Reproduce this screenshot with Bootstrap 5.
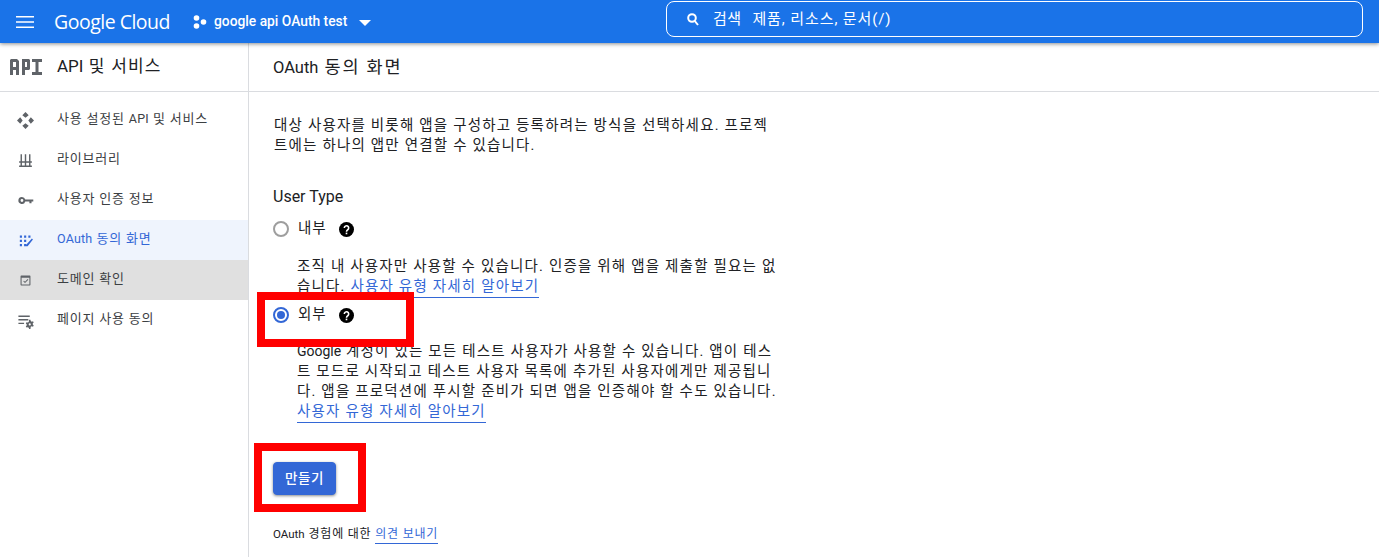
<!DOCTYPE html>
<html lang="ko">
<head>
  <meta charset="UTF-8">
  <title>OAuth 동의 화면</title>
  <link href="https://cdn.jsdelivr.net/npm/bootstrap@5.3.0/dist/css/bootstrap.min.css" rel="stylesheet">
  <style>
    html, body { height: 100%; overflow: hidden; }
    body {
      font-family: Roboto, "Noto Sans CJK KR", sans-serif;
      font-size: 14px;
      color: #202124;
      background: #fff;
    }
    .latin { letter-spacing: 0; font-size: 14px; }
    .top-bar {
      height: 43px;
      background: #1a73e8;
      color: #fff;
      box-shadow: 0 1px 4px rgba(60, 64, 67, .6);
      position: relative;
      z-index: 2;
    }
    .menu-btn { width: 50px; padding-left: 16px; }
    .brand-name { font-family: "Open Sans", sans-serif; font-size: 19.5px; letter-spacing: -.5px; width: 139px; }
    .project-name { font-size: 13.8px; font-weight: 500; width: 473px; }
    .project-name svg { margin-right: 7px; }
    .caret-down { border-left: 6px solid transparent; border-right: 6px solid transparent; border-top: 6px solid #fff; margin-left: 12px; margin-top: 2px; }
    .search-box {
      width: 697px;
      height: 36px;
      border: 1px solid #fff;
      border-radius: 8px;
      padding-left: 20px;
      margin-top: -5px;
      font-size: 15px;
      letter-spacing: .4px;
    }
    .search-box svg { margin-right: 14px; }
    .search-hint { margin-left: 11px; letter-spacing: .9px; }
    .page-body { height: 514px; }
    .side-col { width: 249px; border-right: 1px solid #dadce0; flex-shrink: 0; }
    .side-head { height: 49px; border-bottom: 1px solid #dadce0; padding-left: 10px; font-size: 17px; letter-spacing: 1.2px; margin-bottom: 8px; }
    .side-head svg { margin-right: 15px; }
    .side-head .latin { font-size: 17px; }
    .side-link { height: 40px; padding-left: 17px; padding-bottom: 2px; font-size: 13px; color: #3c4043; text-decoration: none; letter-spacing: .8px; }
    .side-link .latin { font-size: 12.5px; letter-spacing: .2px; }
    .side-link svg { width: 17px; height: 17px; margin: 2px 23px 0 0; flex-shrink: 0; fill: #5f6368; }
    .side-link.is-active { background: #eff4fd; color: #3367d6; }
    .side-link.is-active svg { fill: #3367d6; }
    .side-link.is-hover { background: #e0e0e0; }
    .main-head { height: 49px; border-bottom: 1px solid #dadce0; padding-left: 24px; font-size: 17.5px; letter-spacing: 1.8px; }
    .main-head .latin { font-size: 16.5px; }
    .main-body { padding: 24px 0 0 24px; width: 560px; }
    .intro-text { margin: 0 0 29px 1px; line-height: 20px; width: 530px; font-size: 14.5px; letter-spacing: 1.2px; }
    .type-title { font-size: 16px; line-height: 24px; margin-bottom: 8px; }
    .type-row { height: 24px; font-size: 14.5px; letter-spacing: 1px; }
    .second-row { margin-top: 6px; }
    .radio-ring { width: 16px; height: 16px; border: 2px solid #9e9e9e; border-radius: 50%; margin-right: 9px; flex-shrink: 0; }
    .radio-ring.is-on { border-color: #3367d6; padding: 2px; }
    .radio-ring.is-on::after { content: ""; display: block; width: 8px; height: 8px; background: #3367d6; border-radius: 50%; }
    .help-mark { margin-left: 12px; }
    .type-desc { margin: 14px 0 0 24px; width: 500px; line-height: 20px; font-size: 14.5px; letter-spacing: 1.2px; }
    .type-desc.first-desc { margin-top: 16px; }
    .type-desc a, .feedback-line a { color: #3367d6; text-decoration: none; border-bottom: 1px solid #3367d6; padding-bottom: 2px; }
    .create-btn {
      background: #3367d6;
      border-color: #3367d6;
      color: #fff;
      font-size: 13.5px;
      font-weight: 500;
      letter-spacing: .5px;
      width: 63px;
      height: 33px;
      padding: 0;
      border-radius: 4px;
      margin-top: 40px;
      box-shadow: 0 1px 3px rgba(60, 64, 67, .6);
    }
    .feedback-line { font-size: 12px; letter-spacing: .8px; margin-top: 30px; }
    .feedback-line .latin { font-size: 11.5px; }
    .red-frame { position: absolute; border: 8px solid #f00; z-index: 3; pointer-events: none; }
    .red-one { left: 257px; top: 292px; width: 157px; height: 55px; }
    .red-two { left: 254px; top: 443px; width: 112px; height: 69px; }
  </style>
</head>
<body>
  <header class="top-bar d-flex align-items-center">
    <div class="menu-btn d-flex align-items-center">
      <svg width="18" height="12" viewBox="0 0 18 12" fill="#fff"><path d="M0 0h18v1.6H0zM0 5.2h18v1.6H0zM0 10.4h18V12H0z"/></svg>
    </div>
    <div class="brand-name ms-1">Google Cloud</div>
    <div class="project-name d-flex align-items-center">
      <svg width="14" height="14" viewBox="0 0 14 14" fill="#fff"><circle cx="3.500" cy="3" r="2.800"/><circle cx="3.500" cy="11" r="2.800"/><circle cx="10.500" cy="7" r="2.800"/></svg>
      google api OAuth test
      <span class="caret-down"></span>
    </div>
    <div class="search-box d-flex align-items-center">
      <svg width="12" height="13" viewBox="0 0 12 13" fill="none" stroke="#fff" stroke-width="2"><circle cx="5" cy="5" r="3.800"/><path d="M7.800 8 11 12"/></svg>
      검색 <span class="search-hint">제품, 리소스, 문서(/)</span>
    </div>
  </header>

  <div class="page-body d-flex">
    <nav class="side-col">
      <div class="side-head d-flex align-items-center">
        <svg width="32" height="16" viewBox="0 0 32 16" fill="#5f6368"><path d="M1 0h6l2 2v14H6v-5H3v5H0V1zM3 3v5h3V3zM12 0h7l1 1v9l-1 1h-4v5h-3zM15 3v5h2V3zM22 0h10v3h-3.500v10H32v3H22v-3h3.500V3H22z"/></svg>
        <span><span class="latin">API</span> 및 서비스</span>
      </div>
      <a class="side-link d-flex align-items-center" href="#">
        <svg viewBox="0 0 24 24"><path d="M12 0l4.500 4.500L12 8 7.500 4.500zM12 16l4.500 3.500L12 24l-4.500-4.500zM4.500 7.500 8 12l-3.500 4.500L0 12zM19.500 7.500 24 12l-4.500 4.500L16 12z"/></svg>
        <span>사용 설정된 <span class="latin">API</span> 및 서비스</span>
      </a>
      <a class="side-link d-flex align-items-center" href="#">
        <svg viewBox="0 0 24 24"><path d="M3 19h18v2H3zM3 13h18v2H3zM5 3h2v10H5zM11 3h2v10h-2zM17 3h2v10h-2zM5 15h2v4H5zM11 15h2v4h-2zM17 15h2v4h-2z"/></svg>
        라이브러리
      </a>
      <a class="side-link d-flex align-items-center" href="#">
        <svg viewBox="0 0 24 24"><path d="M7 7a5 5 0 0 1 4.700 3.500H23v3h-2.500V16h-3v-2.500h-5.800A5 5 0 1 1 7 7zm0 3a2 2 0 1 0 0 4 2 2 0 0 0 0-4z"/></svg>
        사용자 인증 정보
      </a>
      <a class="side-link is-active d-flex align-items-center" href="#">
        <svg viewBox="0 0 24 24"><path d="M4 5h3v3H4zM10 5h3v3h-3zM16 5h3v3h-3zM4 11h3v3H4zM10 11h3v3h-3zM4 17h3v3H4zM10 17h3v3h-3zM21 9l1.500 1.500L15 20h-2v-2z"/></svg>
        <span><span class="latin">OAuth</span> 동의 화면</span>
      </a>
      <a class="side-link is-hover d-flex align-items-center" href="#">
        <svg viewBox="0 0 24 24"><path d="M6 5h12a1 1 0 0 1 1 1v12a1 1 0 0 1-1 1H6a1 1 0 0 1-1-1V6a1 1 0 0 1 1-1zm.500 3v9.500h11V8zm8.500 2 1 1-4.700 4.700-2.500-2.500 1-1 1.500 1.500z"/></svg>
        도메인 확인
      </a>
      <a class="side-link d-flex align-items-center" href="#">
        <svg viewBox="0 0 24 24"><path d="M2 5h16v2H2zM2 10h14v2H2zM2 15h8v2H2zM17 11l2 0 .400 1.800 1.500.800 1.700-.600 1 1.800-1.300 1.200v1.700l1.300 1.200-1 1.800-1.700-.600-1.500.800L19 24h-2l-.400-1.800-1.500-.800-1.700.600-1-1.800 1.300-1.200v-1.700l-1.300-1.200 1-1.800 1.700.600 1.500-.800zm1 5a1.500 1.500 0 1 0 0 3 1.500 1.500 0 0 0 0-3z"/></svg>
        페이지 사용 동의
      </a>
    </nav>

    <main class="flex-grow-1">
      <div class="main-head d-flex align-items-center"><span><span class="latin">OAuth</span> 동의 화면</span></div>
      <div class="main-body">
        <p class="intro-text">대상 사용자를 비롯해 앱을 구성하고 등록하려는 방식을 선택하세요. 프로젝<br>트에는 하나의 앱만 연결할 수 있습니다.</p>
        <div class="type-title">User Type</div>

        <div class="type-row d-flex align-items-center">
          <span class="radio-ring"></span>내부
          <svg class="help-mark" width="15" height="15" viewBox="0 0 24 24"><circle cx="12" cy="12" r="12" fill="#000"/><path d="M8.500 9.500a3.500 3.500 0 1 1 5.500 2.900c-1.200.8-2 1.500-2 3" fill="none" stroke="#fff" stroke-width="2.500"/><rect x="10.700" y="17" width="2.600" height="2.600" fill="#fff"/></svg>
        </div>
        <p class="type-desc first-desc mb-0">조직 내 사용자만 사용할 수 있습니다. 인증을 위해 앱을 제출할 필요는 없<br>습니다. <a href="#">사용자 유형 자세히 알아보기</a></p>

        <div class="type-row second-row d-flex align-items-center">
          <span class="radio-ring is-on"></span>외부
          <svg class="help-mark" width="15" height="15" viewBox="0 0 24 24"><circle cx="12" cy="12" r="12" fill="#000"/><path d="M8.500 9.500a3.500 3.500 0 1 1 5.500 2.900c-1.200.8-2 1.500-2 3" fill="none" stroke="#fff" stroke-width="2.500"/><rect x="10.700" y="17" width="2.600" height="2.600" fill="#fff"/></svg>
        </div>
        <p class="type-desc mb-0"><span class="latin">Google</span> 계정이 있는 모든 테스트 사용자가 사용할 수 있습니다. 앱이 테스<br>트 모드로 시작되고 테스트 사용자 목록에 추가된 사용자에게만 제공됩니<br>다. 앱을 프로덕션에 푸시할 준비가 되면 앱을 인증해야 할 수도 있습니다.<br><a href="#">사용자 유형 자세히 알아보기</a></p>

        <button type="button" class="btn create-btn d-block">만들기</button>
        <div class="feedback-line"><span class="latin">OAuth</span> 경험에 대한 <a href="#">의견 보내기</a></div>
      </div>
    </main>
  </div>

  <div class="red-frame red-one"></div>
  <div class="red-frame red-two"></div>

  <script src="https://cdn.jsdelivr.net/npm/bootstrap@5.3.0/dist/js/bootstrap.bundle.min.js"></script>
</body>
</html>
